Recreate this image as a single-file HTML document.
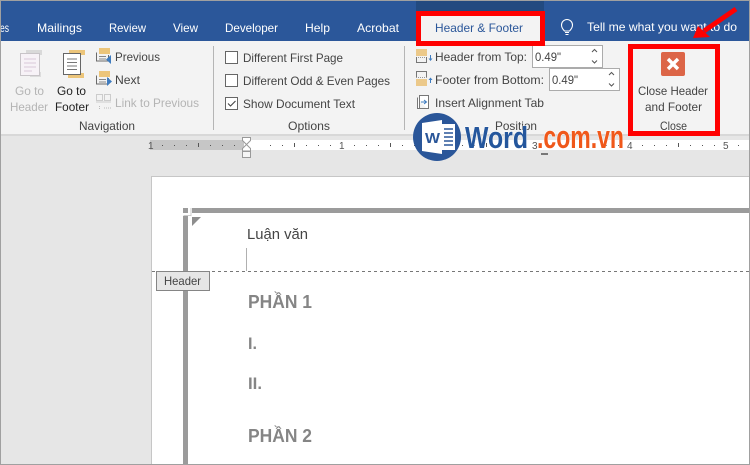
<!DOCTYPE html>
<html><head><meta charset="utf-8">
<style>
html,body{margin:0;padding:0;background:#e6e6e6;width:750px;height:465px;overflow:hidden}
svg{display:block}
text{font-family:"Liberation Sans",sans-serif;font-size:12px;fill:#333}
.w{fill:#fff}.g{fill:#b4b4b4}.c{fill:#444}
</style></head><body>
<svg width="750" height="465" viewBox="0 0 750 465" xmlns="http://www.w3.org/2000/svg">
<rect width="750" height="465" fill="#e6e6e6"/>
<rect width="750" height="41" fill="#2b579a"/>
<rect x="416" y="1" width="128" height="12" fill="#234a80"/>
<rect y="41" width="750" height="93" fill="#f3f3f3"/>
<rect y="134" width="750" height="2" fill="#d8d8d8"/>

<!-- tabs -->
<text class="w" x="0" y="32" textLength="9" lengthAdjust="spacingAndGlyphs">es</text>
<text class="w" x="37" y="32" textLength="45" lengthAdjust="spacingAndGlyphs">Mailings</text>
<text class="w" x="109" y="32" textLength="37" lengthAdjust="spacingAndGlyphs">Review</text>
<text class="w" x="173" y="32" textLength="25" lengthAdjust="spacingAndGlyphs">View</text>
<text class="w" x="225" y="32" textLength="53" lengthAdjust="spacingAndGlyphs">Developer</text>
<text class="w" x="305" y="32" textLength="25" lengthAdjust="spacingAndGlyphs">Help</text>
<text class="w" x="357" y="32" textLength="42" lengthAdjust="spacingAndGlyphs">Acrobat</text>
<rect x="419" y="14" width="122" height="29" fill="#f3f3f3"/>
<text x="435" y="32" textLength="88" lengthAdjust="spacingAndGlyphs" style="fill:#2b579a">Header &amp; Footer</text>
<path d="M564.500 31c-2-2-3-4-3-6a5.500 5.500 0 0 1 11 0c0 2-1 4-3 6zM565 32.500h4M565.500 34.500h3" fill="none" stroke="#fff" stroke-width="1.100"/>
<text class="w" x="587" y="31" textLength="150" lengthAdjust="spacingAndGlyphs">Tell me what you want to do</text>

<!-- Navigation -->
<g fill="none">
<rect x="26" y="50" width="16" height="5" fill="#d9d9d9"/>
<rect x="30" y="72" width="11" height="5" fill="#dcdcdc"/>
<rect x="20.500" y="53.500" width="19" height="22" fill="#f7f2f7" stroke="#c8c4c8"/>
<path d="M24 59h12M24 63h12M24 67h12M24 71h8" stroke="#d8c8d8"/>
<rect x="69" y="50" width="16" height="5" fill="#ecc57a"/>
<rect x="68" y="73" width="16" height="5" fill="#ecc57a"/>
<rect x="63.500" y="53.500" width="17" height="21" fill="#fff" stroke="#666"/>
<path d="M67 59h10M67 62.500h10M67 66h10M67 69.500h10" stroke="#777"/>
<path d="M96.500 52.500v8.500h12v-6" stroke="#6b6b6b"/><path d="M99 56.500h7M99 59h7" stroke="#888"/>
<rect x="99" y="48" width="11" height="6" fill="#ecc57a"/>
<path d="M96.500 75.500v8.500h12v-6" stroke="#6b6b6b"/><path d="M99 79.500h7M99 82h7" stroke="#888"/>
<rect x="99" y="71" width="11" height="6" fill="#ecc57a"/>
<rect x="96.500" y="94.500" width="6" height="6" stroke="#ccc"/><rect x="104.500" y="94.500" width="6" height="6" stroke="#ccc"/>
<path d="M96 102h15" stroke="#ccc"/><path d="M99.500 109v-4M104 108h7" stroke="#bbb" stroke-dasharray="1 1"/>
</g>
<path d="M111 55l-5 4.500 5 4.500z" fill="#3f7cbf"/>
<path d="M107 77v9l5-4.500z" fill="#3f7cbf"/>
<text class="g" x="15" y="95" textLength="29" lengthAdjust="spacingAndGlyphs">Go to</text>
<text class="g" x="10" y="111" textLength="38" lengthAdjust="spacingAndGlyphs">Header</text>
<text x="57" y="95" textLength="29" lengthAdjust="spacingAndGlyphs" style="fill:#222">Go to</text>
<text x="55" y="111" textLength="34" lengthAdjust="spacingAndGlyphs" style="fill:#222">Footer</text>
<text x="115" y="61" textLength="45" lengthAdjust="spacingAndGlyphs" class="c">Previous</text>
<text x="115" y="84" textLength="25" lengthAdjust="spacingAndGlyphs" class="c">Next</text>
<text class="g" x="115" y="107" textLength="84" lengthAdjust="spacingAndGlyphs">Link to Previous</text>
<text class="c" x="79" y="130" textLength="56" lengthAdjust="spacingAndGlyphs">Navigation</text>
<rect x="213" y="46" width="1" height="84" fill="#b5b5b5"/>

<!-- Options -->
<rect x="225.500" y="51.500" width="12" height="12" fill="#fff" stroke="#666"/>
<rect x="225.500" y="74.500" width="12" height="12" fill="#fff" stroke="#666"/>
<rect x="225.500" y="97.500" width="12" height="12" fill="#fff" stroke="#666"/>
<path d="M228 103.500l2.500 2.500 5-5" fill="none" stroke="#444" stroke-width="1.100"/>
<text class="c" x="243" y="62" textLength="100" lengthAdjust="spacingAndGlyphs">Different First Page</text>
<text class="c" x="243" y="85" textLength="147" lengthAdjust="spacingAndGlyphs">Different Odd &amp; Even Pages</text>
<text class="c" x="243" y="108" textLength="112" lengthAdjust="spacingAndGlyphs">Show Document Text</text>
<text class="c" x="288" y="130" textLength="42" lengthAdjust="spacingAndGlyphs">Options</text>
<rect x="404" y="46" width="1" height="84" fill="#b5b5b5"/>

<!-- Position -->
<rect x="416" y="49" width="11" height="7" fill="#ecc98a"/>
<path d="M416 57.500h11" stroke="#999" stroke-dasharray="1 1"/>
<path d="M416.500 57v5.500h10V57" fill="none" stroke="#777"/>
<path d="M430.500 55v5" stroke="#3f7cbf"/><path d="M428.500 58.500l2 2.500 2-2.500z" fill="#3f7cbf"/>
<rect x="416" y="79" width="11" height="7" fill="#ecc98a"/>
<path d="M416 77.500h11" stroke="#999" stroke-dasharray="1 1"/>
<path d="M416.500 77v-5.500h10V77" fill="none" stroke="#777"/>
<path d="M430.500 78v5" stroke="#3f7cbf"/><path d="M428.500 80l2-2.500 2 2.500z" fill="#3f7cbf"/>
<path d="M419.500 95.500h9v13h-9zM417.500 97.500v11h9" fill="#fff" stroke="#777"/>
<path d="M421 102h5M424 100l2.500 2-2.500 2" fill="none" stroke="#3f7cbf"/>
<text class="c" x="435" y="61" textLength="92" lengthAdjust="spacingAndGlyphs">Header from Top:</text>
<text class="c" x="435" y="84" textLength="109" lengthAdjust="spacingAndGlyphs">Footer from Bottom:</text>
<text class="c" x="435" y="107" textLength="109" lengthAdjust="spacingAndGlyphs">Insert Alignment Tab</text>
<rect x="532.500" y="45.500" width="70" height="22" fill="#fff" stroke="#ababab"/>
<rect x="549.500" y="68.500" width="70" height="22" fill="#fff" stroke="#ababab"/>
<text x="535" y="61" textLength="26" lengthAdjust="spacingAndGlyphs" class="c">0.49"</text>
<text x="552" y="84" textLength="26" lengthAdjust="spacingAndGlyphs" class="c">0.49"</text>
<path d="M592 52l2.500-2.500 2.500 2.500M592 60.500l2.500 2.500 2.500-2.500M609 75l2.500-2.500 2.500 2.500M609 83.500l2.500 2.500 2.500-2.500" fill="none" stroke="#555"/>
<text class="c" x="495" y="130" textLength="42" lengthAdjust="spacingAndGlyphs">Position</text>

<!-- Close -->
<rect x="661" y="52" width="24" height="24" rx="2" fill="#dc6547"/>
<path d="M668 59l10 10M678 59l-10 10" stroke="#fff" stroke-width="3.400" fill="none"/>
<text x="638" y="95" textLength="70" lengthAdjust="spacingAndGlyphs" class="c">Close Header</text>
<text x="645" y="111" textLength="57" lengthAdjust="spacingAndGlyphs" class="c">and Footer</text>
<text x="660" y="130" textLength="27" lengthAdjust="spacingAndGlyphs" class="c">Close</text>

<!-- ruler -->
<rect x="150" y="140" width="600" height="10" fill="#fff"/>
<rect x="150" y="140" width="94" height="10" fill="#c6c6c6"/>
<g fill="#555">
<rect x="162" y="145" width="1" height="1"/><rect x="174" y="145" width="1" height="1"/><rect x="186" y="145" width="1" height="1"/><rect x="198" y="143" width="1" height="4"/><rect x="210" y="145" width="1" height="1"/><rect x="222" y="145" width="1" height="1"/><rect x="234" y="145" width="1" height="1"/>
<rect x="270" y="145" width="1" height="1"/><rect x="282" y="145" width="1" height="1"/><rect x="294" y="143" width="1" height="4"/><rect x="306" y="145" width="1" height="1"/><rect x="318" y="145" width="1" height="1"/><rect x="330" y="145" width="1" height="1"/>
<rect x="354" y="145" width="1" height="1"/><rect x="366" y="145" width="1" height="1"/><rect x="378" y="145" width="1" height="1"/><rect x="390" y="143" width="1" height="4"/><rect x="402" y="145" width="1" height="1"/><rect x="414" y="145" width="1" height="1"/><rect x="426" y="145" width="1" height="1"/>
<rect x="450" y="145" width="1" height="1"/><rect x="462" y="145" width="1" height="1"/><rect x="474" y="145" width="1" height="1"/><rect x="486" y="143" width="1" height="4"/>
<rect x="594" y="145" width="1" height="1"/><rect x="606" y="145" width="1" height="1"/><rect x="618" y="145" width="1" height="1"/>
<rect x="642" y="145" width="1" height="1"/><rect x="654" y="145" width="1" height="1"/><rect x="666" y="145" width="1" height="1"/><rect x="678" y="143" width="1" height="4"/><rect x="690" y="145" width="1" height="1"/><rect x="702" y="145" width="1" height="1"/><rect x="714" y="145" width="1" height="1"/>
<rect x="738" y="145" width="1" height="1"/>
</g>
<text x="148" y="149" style="font-size:10px;fill:#555">1</text>
<text x="339" y="149" style="font-size:10px;fill:#555">1</text>
<text x="532" y="149" style="font-size:10px;fill:#555">3</text>
<text x="627" y="149" style="font-size:10px;fill:#555">4</text>
<text x="723" y="149" style="font-size:10px;fill:#555">5</text>
<path d="M242.500 137.500h8v3l-4 4-4-4zM246.500 144.500l4 4v2.500h-8v-2.500z" fill="#fff" stroke="#999"/>
<rect x="242.500" y="151.500" width="8" height="6" fill="#f5f5f5" stroke="#999"/>
<path d="M541 153h7v2h-7z" fill="#777"/>

<!-- page -->
<rect x="151.500" y="176.500" width="620" height="300" fill="#fff" stroke="#c6c6c6"/>
<rect x="183" y="216" width="5" height="249" fill="#9b9b9b"/>
<rect x="192" y="208" width="558" height="5" fill="#9b9b9b"/>
<rect x="183" y="208" width="5" height="5" fill="#9b9b9b"/>
<path d="M183.500 215.500h7.500V208" fill="none" stroke="#ccc"/>
<path d="M192 217h9l-9 9z" fill="#8e8e8e"/>
<text x="247" y="239" textLength="61" lengthAdjust="spacingAndGlyphs" style="font-family:'Liberation Sans',sans-serif;font-size:15px;fill:#444">Luận văn</text>
<rect x="246" y="248" width="1" height="23" fill="#b0b0b0"/>
<path d="M152 271.500h598" stroke="#777" stroke-dasharray="3 3" fill="none"/>
<rect x="156.500" y="271.500" width="53" height="19" fill="#e6e6e6" stroke="#858585"/>
<text x="164" y="285" textLength="37" lengthAdjust="spacingAndGlyphs" style="fill:#444">Header</text>
<text x="248" y="308" textLength="64" lengthAdjust="spacingAndGlyphs" style="font-size:18px;font-weight:bold;fill:#858585">PHẦN 1</text>
<text x="248" y="349" style="font-size:17px;font-weight:bold;fill:#858585" textLength="9" lengthAdjust="spacingAndGlyphs">I.</text>
<text x="248" y="389" style="font-size:17px;font-weight:bold;fill:#858585" textLength="14" lengthAdjust="spacingAndGlyphs">II.</text>
<text x="248" y="442" textLength="64" lengthAdjust="spacingAndGlyphs" style="font-size:18px;font-weight:bold;fill:#858585">PHẦN 2</text>

<!-- red highlights -->
<rect x="418.500" y="13.500" width="124" height="30" fill="none" stroke="#f00" stroke-width="5"/>
<rect x="630.500" y="46.500" width="87" height="87" fill="none" stroke="#f00" stroke-width="5"/>
<path d="M736 9L704 31" stroke="#f00" stroke-width="5" fill="none"/>
<path d="M693 38L710 37 698 26z" fill="#f00"/>

<!-- logo -->
<circle cx="437" cy="137" r="24" fill="#2a5699"/>
<path d="M422 123l20-3v34l-20-3z" fill="#fff"/>
<rect x="442" y="124" width="13" height="26" fill="#fff"/>
<path d="M444 129h9M444 133h9M444 137h9M444 141h9M444 145h9" stroke="#2a5699" stroke-width="1.500"/>
<text x="425" y="143" textLength="15" lengthAdjust="spacingAndGlyphs" style="font-size:15px;font-weight:bold;fill:#2a5699">W</text>
<text x="465" y="148" textLength="63" lengthAdjust="spacingAndGlyphs" style="font-size:31px;font-weight:bold;fill:#24569c;stroke:#fff;stroke-width:1;paint-order:stroke">Word</text>
<text x="537" y="148" textLength="87" lengthAdjust="spacingAndGlyphs" style="font-size:32px;font-weight:bold;fill:#f0581a;stroke:#fff;stroke-width:1;paint-order:stroke">.com.vn</text>

<!-- outer 1px frame -->
<rect x="0.500" y="0.500" width="749" height="464" fill="none" stroke="#a0a0a0"/>
</svg>
</body></html>
